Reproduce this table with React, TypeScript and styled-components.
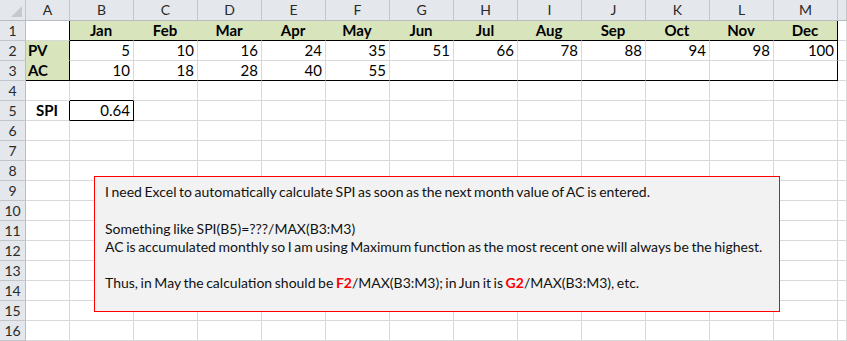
import React from "react";
import styled, { createGlobalStyle } from "styled-components";

const GlobalStyle = createGlobalStyle`
  html, body {
    margin: 0;
    padding: 0;
    background: #ffffff;
    overflow: hidden;
  }
`;

const GRID = "#d9d9d9";
const GREEN = "#d8e4bc";
const INK = "#000000";

// the last column is only partly visible, so its letter stays blank
const COLS = ["A", "B", "C", "D", "E", "F", "G", "H", "I", "J", "K", "L", "M", ""];
const MONTHS = ["Jan", "Feb", "Mar", "Apr", "May", "Jun", "Jul", "Aug", "Sep", "Oct", "Nov", "Dec"];
const PV = [5, 10, 16, 24, 35, 51, 66, 78, 88, 94, 98, 100];
const AC = [10, 18, 28, 40, 55];

type CellSpec = {
  text?: string | number;
  bold?: boolean;
  align?: "left" | "center" | "right";
  fill?: string;
  rb?: boolean; // black right border
  bb?: boolean; // black bottom border
};

const Sheet = styled.div`
  position: relative;
  width: 847px;
  height: 341px;
  overflow: hidden;
  font-family: Lato, "Liberation Sans", sans-serif;
  font-size: 15px;
  color: #000;
`;

const Grid = styled.div`
  display: grid;
  grid-template-columns: 26px 44px repeat(12, 64px) 1fr;
  grid-template-rows: 21px repeat(16, 20px);
`;

const Corner = styled.div`
  position: relative;
  box-sizing: border-box;
  background: #e4e7eb;
  border-right: 1px solid #c3c7cc;
  border-bottom: 1px solid #b9bdc3;

  &::after {
    content: "";
    position: absolute;
    right: 3px;
    bottom: 3px;
    width: 0;
    height: 0;
    border-left: 11px solid transparent;
    border-bottom: 11px solid #c5c9ce;
  }
`;

const ColHead = styled.div`
  box-sizing: border-box;
  background: #e4e7eb;
  border-right: 1px solid #c3c7cc;
  border-bottom: 1px solid #b9bdc3;
  text-align: center;
  line-height: 20px;
  font-size: 14px;
  color: #2a2a2a;
  overflow: hidden;
`;

const RowHead = styled.div`
  box-sizing: border-box;
  background: #e4e7eb;
  border-right: 1px solid #b9bdc3;
  border-bottom: 1px solid #c3c7cc;
  text-align: center;
  line-height: 19px;
  font-size: 14px;
  color: #2a2a2a;
`;

const Cell = styled.div<{
  $bold?: boolean;
  $align?: string;
  $fill?: string;
  $rb?: boolean;
  $bb?: boolean;
}>`
  box-sizing: border-box;
  padding: 0 3px 0 2px;
  white-space: nowrap;
  line-height: 19px;
  font-weight: ${(p) => (p.$bold ? 700 : 400)};
  text-align: ${(p) => p.$align || "left"};
  background: ${(p) => p.$fill || "#ffffff"};
  border-right: 1px solid ${(p) => (p.$rb ? INK : p.$fill || GRID)};
  border-bottom: 1px solid ${(p) => (p.$bb ? INK : p.$fill || GRID)};
`;

const Note = styled.div`
  position: absolute;
  left: 94px;
  top: 176px;
  width: 686px;
  height: 136px;
  box-sizing: border-box;
  padding: 6px 10px;
  background: #f2f2f2;
  border: 1.5px solid #ff0000;
  font-family: Lato, "Liberation Sans", sans-serif;
  font-size: 14px;
  word-spacing: -1px;
  line-height: 18.3px;
  color: #111111;
`;

const NoteLine = styled.div`
  min-height: 18.3px;
  white-space: nowrap;
`;

const Ref = styled.span`
  color: #ff0000;
  font-weight: 700;
`;

function buildRows(): CellSpec[][] {
  const rows: CellSpec[][] = [];
  for (let r = 1; r <= 16; r++) {
    const row: CellSpec[] = [];
    for (let c = 0; c < 14; c++) {
      const cell: CellSpec = {};
      const m = c - 1; // month index for columns B..M
      const inTable = r <= 3 && c <= 12;
      if (r === 1 && c >= 1 && c <= 12) {
        cell.text = MONTHS[m];
        cell.bold = true;
        cell.align = "center";
        cell.fill = GREEN;
        cell.bb = true;
      }
      if ((r === 2 || r === 3) && c === 0) {
        cell.text = r === 2 ? "PV" : "AC";
        cell.bold = true;
        cell.fill = GREEN;
      }
      if (r === 2 && c >= 1 && c <= 12) {
        cell.text = PV[m];
        cell.align = "right";
      }
      if (r === 3 && c >= 1 && c <= 12) {
        cell.text = AC[m];
        cell.align = "right";
      }
      if (inTable && c === 0) cell.rb = true;
      if (inTable && c === 12) cell.rb = true;
      if (r === 3 && c <= 12) cell.bb = true;
      if (r === 4 && c === 1) cell.bb = true;
      if (r === 5 && c === 0) {
        cell.text = "SPI";
        cell.bold = true;
        cell.align = "center";
        cell.rb = true;
      }
      if (r === 5 && c === 1) {
        cell.text = "0.64";
        cell.align = "right";
        cell.rb = true;
        cell.bb = true;
      }
      row.push(cell);
    }
    rows.push(row);
  }
  return rows;
}

const rows = buildRows();

export default function App() {
  return (
    <>
      <GlobalStyle />
      <Sheet>
        <Grid>
          <Corner />
          {COLS.map((c, i) => (
            <ColHead key={i}>{c}</ColHead>
          ))}
          {rows.map((row, ri) => (
            <React.Fragment key={ri}>
              <RowHead>{ri + 1}</RowHead>
              {row.map((cell, ci) => (
                <Cell
                  key={ci}
                  $bold={cell.bold}
                  $align={cell.align}
                  $fill={cell.fill}
                  $rb={cell.rb}
                  $bb={cell.bb}
                >
                  {cell.text}
                </Cell>
              ))}
            </React.Fragment>
          ))}
        </Grid>
        <Note>
          <NoteLine>
            I need Excel to automatically calculate SPI as soon as the next month value of AC is entered.
          </NoteLine>
          <NoteLine />
          <NoteLine>Something like SPI(B5)=???/MAX(B3:M3)</NoteLine>
          <NoteLine>
            AC is accumulated monthly so I am using Maximum function as the most recent one will always be the highest.
          </NoteLine>
          <NoteLine />
          <NoteLine>
            Thus, in May the calculation should be <Ref>F2</Ref>/MAX(B3:M3); in Jun it is <Ref>G2</Ref>/MAX(B3:M3), etc.
          </NoteLine>
        </Note>
      </Sheet>
    </>
  );
}
